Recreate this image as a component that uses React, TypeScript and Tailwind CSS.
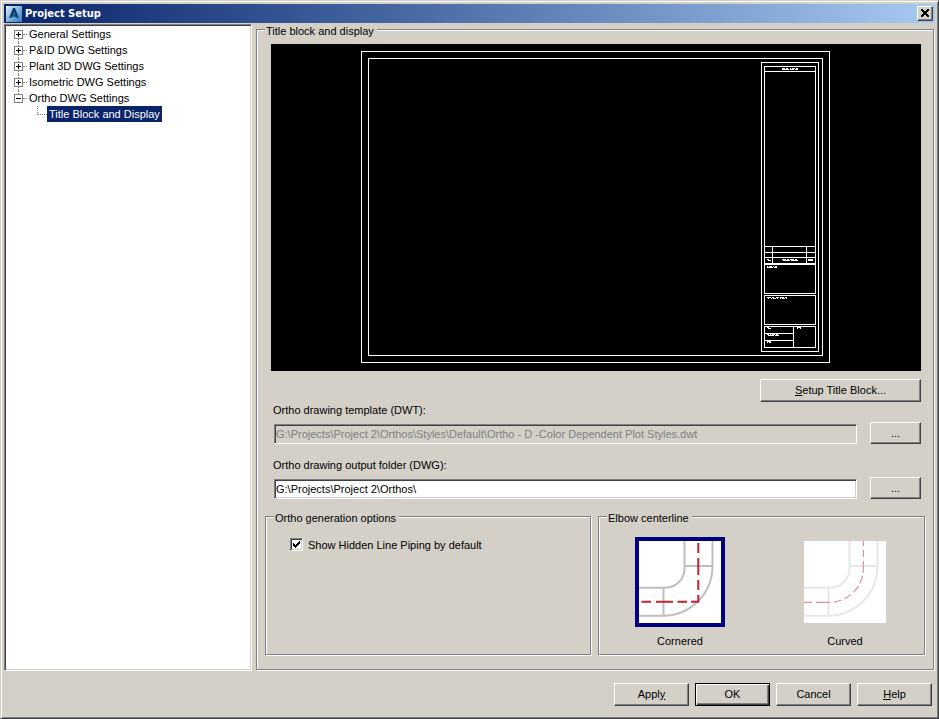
import React, { useState } from 'react';
import clsx from 'clsx';

const RAISED =
  'border border-t-white border-l-white border-b-[#404040] border-r-[#404040] shadow-[inset_-1px_-1px_0_#808080]';
const SUNKEN =
  'border border-t-[#808080] border-l-[#808080] border-b-white border-r-white shadow-[inset_1px_1px_0_#404040,inset_-1px_-1px_0_#d4d0c8]';

const treeItems = [
  { label: 'General Settings' },
  { label: 'P&ID DWG Settings' },
  { label: 'Plant 3D DWG Settings' },
  { label: 'Isometric DWG Settings' },
  { label: 'Ortho DWG Settings', children: ['Title Block and Display'] },
];

type ButtonProps = React.ButtonHTMLAttributes<HTMLButtonElement> & { isDefault?: boolean };

const Button: React.FC<ButtonProps> = ({ isDefault, className, children, ...rest }) => (
  <button
    type="button"
    className={clsx(
      'bg-[#d4d0c8] text-center leading-4',
      isDefault
        ? 'border border-black shadow-[inset_1px_1px_0_#fff,inset_-1px_-1px_0_#404040,inset_-2px_-2px_0_#808080]'
        : RAISED,
      className,
    )}
    {...rest}
  >
    {children}
  </button>
);

type GroupProps = { title: string; className?: string; children: React.ReactNode };

// Etched frame: gray line with a white one next to it
const Group: React.FC<GroupProps> = ({ title, className, children }) => (
  <fieldset
    className={clsx(
      'min-w-0 border border-[#808080] px-2 shadow-[1px_1px_0_#fff,inset_1px_1px_0_#fff]',
      className,
    )}
  >
    <legend className="h-[11px] bg-[#d4d0c8] pl-px pr-[3px] leading-[15px]">{title}</legend>
    {children}
  </fieldset>
);

const AppIcon = () => (
  <svg width="16" height="16" viewBox="0 0 16 16" aria-hidden="true">
    <defs>
      <linearGradient id="app-icon" x1="0" y1="0" x2="1" y2="1">
        <stop offset="0" stopColor="#e4eef6" />
        <stop offset="0.45" stopColor="#8db8dc" />
        <stop offset="1" stopColor="#2f7fc0" />
      </linearGradient>
    </defs>
    <rect width="16" height="16" fill="url(#app-icon)" />
    <path d="M7 2h2l4 10-3-.5-2-2-1.500 1.500L3 12z" fill="#0b3f70" />
    <path d="M8 6l1.200 2.500H6.800z" fill="#3a80b8" />
    <path d="M3 12l3.500-2.500h3L13 12l-3.500-.5-1.500-1-2 1z" fill="#175a94" />
  </svg>
);

const TitleBar = () => (
  <header className="flex h-[19px] items-center bg-linear-to-r from-[#0a246a] to-[#a6caf0] px-[2px]">
    <AppIcon />
    <h1 className="ml-[3px] flex-1 font-['DejaVu_Sans_Condensed','DejaVu_Sans',sans-serif] text-[11px] font-bold leading-4 text-white">
      Project Setup
    </h1>
    <button
      type="button"
      aria-label="Close"
      className={clsx('flex h-[15px] w-4 items-center justify-center bg-[#d4d0c8] pb-px pr-px', RAISED)}
    >
      <svg width="8" height="8" viewBox="0 0 8 8" shapeRendering="crispEdges">
        <path d="M0 0h2v1h1v1h2V1h1V0h2v2H7v1H6v2h1v1h1v2H6V7H5V6H3v1H2v1H0V6h1V5h1V3H1V2H0z" />
      </svg>
    </button>
  </header>
);

const SettingsTree = () => (
  <nav className={clsx('w-[248px] shrink-0 bg-white py-px pl-[9px]', SUNKEN)}>
    <ul>
      {treeItems.map((item, index) => (
        <li key={item.label}>
          <div className="flex h-4 items-stretch">
            <div className="flex w-[9px] flex-col">
              <span
                className={clsx(
                  'ml-1 flex-1 border-l border-dotted',
                  index === 0 ? 'border-transparent' : 'border-[#808080]',
                )}
              />
              <button
                type="button"
                aria-label={item.label}
                aria-expanded={!!item.children}
                className="flex h-[9px] w-[9px] items-center justify-center border border-[#808080] bg-white"
              >
                <svg width="5" height="5" viewBox="0 0 5 5" shapeRendering="crispEdges">
                  <path d={item.children ? 'M0 2h5v1H0z' : 'M0 2h5v1H0zM2 0h1v5H2z'} />
                </svg>
              </button>
              <span
                className={clsx(
                  'ml-1 flex-1 border-l border-dotted',
                  item.children ? 'border-transparent' : 'border-[#808080]',
                )}
              />
            </div>
            <span className="w-1 self-center border-t border-dotted border-[#808080]" />
            <a href="#" className="px-[2px] leading-4">
              {item.label}
            </a>
          </div>
          {item.children && (
            <ul>
              {item.children.map(child => (
                <li key={child} className="flex h-4 pl-[23px]">
                  <span className="h-[9px] w-[10px] border-b border-l border-dotted border-[#808080]" />
                  <a href="#" aria-current="page" className="bg-[#0a246a] px-[2px] leading-4 text-white">
                    {child}
                  </a>
                </li>
              ))}
            </ul>
          )}
        </li>
      ))}
    </ul>
  </nav>
);

const SheetPreview = () => (
  <svg
    viewBox="0 0 650 327"
    className="block w-full bg-black"
    shapeRendering="crispEdges"
    role="img"
    aria-label="Title block preview"
  >
    <g fill="none" stroke="#fff" strokeWidth="1">
      <rect x="90.5" y="7.5" width="468" height="311" />
      <rect x="97.5" y="14.5" width="454" height="297" />
      <rect x="490.5" y="18.5" width="57" height="289" />
      <rect x="493.5" y="22.5" width="51" height="197" />
      <path d="M493 27.5h52M493 202.5h52M493 208.5h52M493 213.5h52M501.5 202v17M535.5 202v17" />
      <rect x="493.5" y="220.5" width="51" height="29" />
      <rect x="493.5" y="251.5" width="51" height="29" />
      <rect x="493.5" y="282.5" width="51" height="21" />
      <path d="M522.5 282v21M493 289.5h29M493 296.5h29" />
    </g>
    {/* Field captions, too small to be legible at this scale */}
    <g fill="none" stroke="#fff" strokeWidth="1">
      <path d="M511 24.5h16" strokeDasharray="3 1 2 2 1 1" />
      <path d="M511 25.5h16" strokeDasharray="7 1 4 1" />
      <path d="M496 215.5h2M511 215.5h15" strokeDasharray="4 1 2 1" />
      <path d="M497 216.5h3M512 216.5h15" strokeDasharray="7 1" />
      <path d="M537 215.5h5M537 216.5h5" />
      <path d="M496 222.5h10" strokeDasharray="1 1 3 1" />
      <path d="M496 223.5h10" strokeDasharray="6 1" />
      <path d="M496 253.5h20" strokeDasharray="4 1 2 2 3 1" />
      <path d="M497 254.5h19" strokeDasharray="1 2 1 1 3 1" />
      <path d="M496 283.5h2M497 284.5h3M526 283.5h4M526 284.5h1M529 284.5h1" />
      <path d="M496 290.5h12" strokeDasharray="2 1 1 1 3 1" />
      <path d="M497 291.5h11" strokeDasharray="6 1" />
      <path d="M496 297.5h4M496 298.5h1M498 298.5h2" />
    </g>
  </svg>
);

const ElbowPipe = () => (
  <path
    d="M45.500 0v27.500a19 19 0 0 1-19 19.200H0M73.500 0v25A49.500 49.500 0 0 1 24.500 74.700H0M45.500 25h28M24.500 46.700v28"
    fill="none"
    stroke="#bfbfbf"
    strokeWidth="2"
  />
);

const CorneredElbow = () => (
  <svg width="82" height="82" viewBox="0 0 82 82" className="bg-white" aria-hidden="true">
    <ElbowPipe />
    <path
      d="M59.3 2v10M59.3 17v17M59.3 39v10M59.3 54v7.7M2.500 60.7h9.500M17 60.7h17M38.500 60.7h9.500M52 60.7h8"
      fill="none"
      stroke="#c4202f"
      strokeWidth="2"
    />
  </svg>
);

const CurvedElbow = () => (
  <svg width="82" height="82" viewBox="0 0 82 82" className="bg-white" aria-hidden="true">
    <g opacity="0.38">
      <ElbowPipe />
    </g>
    <path
      d="M0 61.4h25A34.3 34.3 0 0 0 59.4 27V0"
      fill="none"
      stroke="#e0929a"
      strokeWidth="1.2"
      strokeDasharray="8 4 14 4 8 3 8 3 8 3 8 3 12 4 7 4 8"
    />
  </svg>
);

type PathFieldProps = {
  id: string;
  label: string;
  value: string;
  disabled?: boolean;
  onChange?: (value: string) => void;
};

const PathField: React.FC<PathFieldProps> = ({ id, label, value, disabled, onChange }) => (
  <div className="pl-2 pr-1">
    <label htmlFor={id} className="block leading-4">
      {label}
    </label>
    <div className="mt-1 flex items-end gap-[13px] pl-px">
      <input
        id={id}
        type="text"
        value={value}
        disabled={disabled}
        onChange={event => onChange?.(event.target.value)}
        className={clsx(
          'h-5 min-w-0 flex-1 px-px leading-4 disabled:text-[#808080]',
          disabled ? 'bg-[#d4d0c8]' : 'bg-white',
          SUNKEN,
        )}
      />
      <Button aria-label={`Browse: ${label}`} className="h-[22px] w-[51px]">
        ...
      </Button>
    </div>
  </div>
);

const elbowOptions = [
  { id: 'cornered', label: 'Cornered', Picture: CorneredElbow },
  { id: 'curved', label: 'Curved', Picture: CurvedElbow },
];

const App: React.FC = () => {
  const [outputFolder, setOutputFolder] = useState('G:\\Projects\\Project 2\\Orthos\\');
  const [showHidden, setShowHidden] = useState(true);
  const [elbow, setElbow] = useState('cornered');

  return (
    <div className="flex min-h-screen flex-col border border-t-[#d4d0c8] border-l-[#d4d0c8] border-b-[#404040] border-r-[#404040] bg-[#d4d0c8] p-[3px] font-['Liberation_Sans',Arial,sans-serif] text-[11px] text-black shadow-[inset_1px_1px_0_#fff,inset_-1px_-1px_0_#808080]">
      <TitleBar />

      <main className="flex flex-1 gap-1 pt-px">
        <SettingsTree />

        <Group title="Title block and display" className="mb-px mr-px flex flex-1 flex-col pb-[14px] pt-[9px]">
          <div className="flex flex-col pl-[6px] pr-1">
            <SheetPreview />
            <Button className="mt-2 h-[23px] w-[161px] self-end pb-[2px]">
              <u>S</u>etup Title Block...
            </Button>
          </div>

          <PathField
            id="template"
            label="Ortho drawing template (DWT):"
            value="G:\Projects\Project 2\Orthos\Styles\Default\Ortho - D -Color Dependent Plot Styles.dwt"
            disabled
          />
          <div className="mt-[13px]">
            <PathField
              id="output"
              label="Ortho drawing output folder (DWG):"
              value={outputFolder}
              onChange={setOutputFolder}
            />
          </div>

          <div className="mt-3 grid flex-1 grid-cols-[326fr_327fr] gap-[7px]">
            <Group title="Ortho generation options" className="pt-[15px]">
              <label className="ml-4 flex items-start gap-[5px] leading-4">
                <span className="relative mt-px flex">
                  <input
                    type="checkbox"
                    checked={showHidden}
                    onChange={event => setShowHidden(event.target.checked)}
                    className={clsx('h-[13px] w-[13px] appearance-none bg-white', SUNKEN)}
                  />
                  {showHidden && (
                    <svg
                      width="7"
                      height="7"
                      viewBox="0 0 7 7"
                      shapeRendering="crispEdges"
                      className="pointer-events-none absolute left-[3px] top-[3px]"
                    >
                      <path d="M0 2h1v1h1v1h1V3h1V2h1V1h1V0h1v3H6v1H5v1H4v1H3v1H2V6H1V5H0z" />
                    </svg>
                  )}
                </span>
                Show Hidden Line Piping by default
              </label>
            </Group>

            <Group title="Elbow centerline" className="pt-[15px]">
              <div className="flex justify-between pb-1 pl-7 pr-[26px]">
                {elbowOptions.map(({ id, label, Picture }) => (
                  <label key={id} className="flex flex-col items-center">
                    <input
                      type="radio"
                      name="elbow"
                      value={id}
                      checked={elbow === id}
                      onChange={() => setElbow(id)}
                      className="sr-only"
                    />
                    <span className={clsx('border-4', elbow === id ? 'border-[#000080]' : 'border-transparent')}>
                      <Picture />
                    </span>
                    <span className="mt-[6px] leading-4">{label}</span>
                  </label>
                ))}
              </div>
            </Group>
          </div>
        </Group>
      </main>

      <footer className="flex justify-end gap-[6px] pb-[9px] pr-[3px] pt-3">
        <Button className="h-[23px] w-[75px] pb-[2px]">
          Appl<u>y</u>
        </Button>
        <Button isDefault className="h-[23px] w-[75px] pb-[2px]">
          OK
        </Button>
        <Button className="h-[23px] w-[75px] pb-[2px]">Cancel</Button>
        <Button className="h-[23px] w-[75px] pb-[2px]">
          <u>H</u>elp
        </Button>
      </footer>
    </div>
  );
};

export default App;
